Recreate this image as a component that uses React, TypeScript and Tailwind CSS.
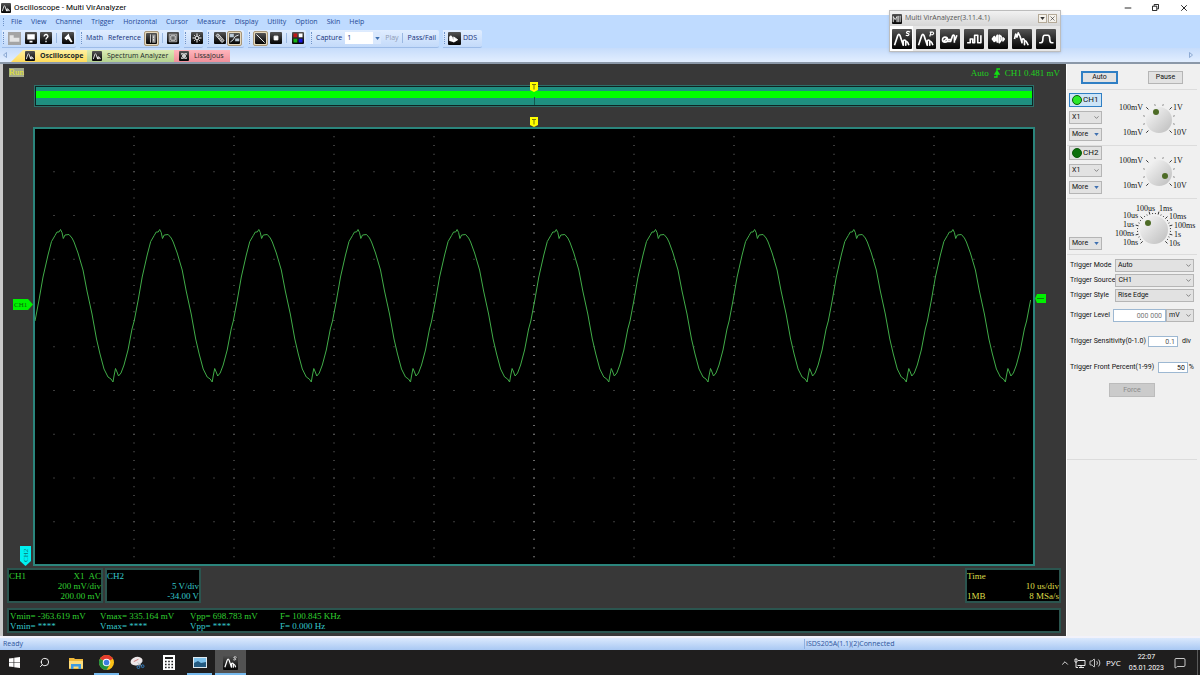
import { useState, type ReactNode } from "react";
import { ChevronDown, ChevronUp, MessageSquare, Minus, Search, Volume2, X } from "lucide-react";
import clsx from "clsx";

const menus = [
  "File", "View", "Channel", "Trigger", "Horizontal", "Cursor",
  "Measure", "Display", "Utility", "Option", "Skin", "Help",
];

const glyphs = {
  spectrum: "M2 13 L4.500 5.500 Q5.500 3 6.500 5.500 L9 13 V9.500 Q10 8 11 9.500 V13 V10.500 Q12 9.500 12.700 11 L13.500 13",
  pulse: "M2.500 11 H5 V8 H7 V11 H8.500 V5 H11 V11 H13.500 V5",
  burst: "M3.500 8 L5 6 V10z M6.300 10 V7 L7.500 5 V11 M9 5 V11 L10.500 9 V6z M12 7 L13 8 L12 9.500z",
  decay: "M2 8 L3 4 L4 6.500 L5 3 L6.500 6 L8 11 V8.500 Q9 7 10 9 V12.500 V10 Q11 9 11.700 10.500 L13 13",
  gauss: "M2.500 11 H4 Q5.500 11 5.500 8 Q5.500 5 7 5 H9.500 Q11 5 11 8 Q11 11 12.500 11 H14",
  lissa: "M4 4 C12 4 12 12 4 12 C2 9 14 7 12 4 C4 4 4 12 12 12 C14 9 2 7 4 4",
};

function Tile({ size = "size-3", children }: { size?: string; children: ReactNode }) {
  return (
    <svg
      viewBox="0 0 16 16"
      className={clsx("shrink-0 rounded-[1px] bg-linear-to-b from-[#555] to-[#050505]", size)}
      fill="none"
      stroke="white"
      strokeWidth="1.3"
      strokeLinejoin="round"
    >
      {children}
    </svg>
  );
}

function ToolButton({ label, active, children }: { label: string; active?: boolean; children: ReactNode }) {
  return (
    <button
      aria-label={label}
      className={clsx(
        "flex h-[15px] w-[15px] shrink-0 items-center justify-center rounded-[2px]",
        active && "border border-[#a8977a] bg-[#e5d8bd]",
      )}
    >
      <Tile size={active ? "size-[11px]" : "size-3"}>{children}</Tile>
    </button>
  );
}

function ToolGroup({ width, children }: { width: string; children: ReactNode }) {
  return (
    <div
      className={clsx(
        "flex h-[18px] shrink-0 items-center rounded-r-[2px] border-b border-[#9dbce8] bg-linear-to-b from-[#e0edff] to-[#c3dafa]",
        width,
      )}
    >
      <span className="mr-[3px] ml-px h-3 border-l border-dotted border-[#6f93c9]" />
      {children}
    </div>
  );
}

function Separator() {
  return <span className="mx-[3px] h-[10px] w-px shrink-0 bg-[#9ab8e2]" />;
}

function Toolbar() {
  return (
    <div className="flex h-[19px] items-center gap-1 bg-[#bfdbff] pl-[2px] text-[7px] text-[#15317a]">
      <ToolGroup width="w-[74px]">
        <button aria-label="Open" className="mr-px flex size-[15px] items-center justify-center">
          <svg viewBox="0 0 16 16" className="size-[13px] bg-[#a4a4a4]">
            <path d="M2 4h5v3h7v5H2z" fill="#e4e4e4" />
          </svg>
        </button>
        <ToolButton label="Save">
          <path d="M3 3h10v7H3zM6 11.500h4v2.500H6z" fill="white" stroke="none" />
        </ToolButton>
        <ToolButton label="About">
          <path d="M5.500 6 C5.500 2 11 3 10.500 6 C10 8 8 7.500 8 10 M8 11.500 V13.500" strokeWidth="1.800" />
        </ToolButton>
        <Separator />
        <ToolButton label="Tools">
          <path d="M3 8 L9 2 L10 6 L14 13 L12 14 L8 9 L6 11z" fill="white" stroke="none" />
        </ToolButton>
      </ToolGroup>
      <ToolGroup width="w-[100px]">
        <button className="ml-px">Math</button>
        <button className="mr-[3px] ml-[5px]">Reference</button>
        <ToolButton label="Panel" active>
          <path d="M9 2h5v12H9z" fill="#999" stroke="none" />
          <path d="M6.500 2v12" stroke="#ddd" />
          <path d="M11 5v2M11 9v2" />
        </ToolButton>
        <Separator />
        <ToolButton label="Full screen">
          <path d="M3 3h10v10H3z" stroke="#b5b5b5" />
          <path d="M5 5h6v6H5z" fill="#666" stroke="#ddd" />
        </ToolButton>
      </ToolGroup>
      <ToolGroup width="w-[19px]">
        <ToolButton label="Auto set">
          <circle cx="8" cy="8" r="2.500" />
          <path d="M8 2v3M8 11v3M2 8h3M11 8h3M4 4l1 1M12 4l-1 1M4 12l1-1M12 12l-1-1" />
        </ToolButton>
      </ToolGroup>
      <ToolGroup width="w-[37px]">
        <ToolButton label="Ruler">
          <path d="M2.500 4.500l3-2 8 9-3 2.500z" fill="#777" strokeWidth="1" />
          <path d="M5 6l2-1M7 9l2-1M9 11l2-1" strokeWidth="1" />
        </ToolButton>
        <ToolButton label="Cursors" active>
          <path d="M1 1h6v5H1zM9 8h6v4H9z" fill="#b9c9d6" stroke="none" />
          <path d="M2 13l4-3 3-5 5-2" stroke="#eef4f8" />
        </ToolButton>
      </ToolGroup>
      <ToolGroup width="w-[58px]">
        <ToolButton label="Line" active>
          <path d="M2 2l12 12" />
        </ToolButton>
        <ToolButton label="Dots">
          <path d="M5.500 5.500h5v5h-5z" fill="white" />
        </ToolButton>
        <Separator />
        <ToolButton label="Colors">
          <g stroke="none">
            <path d="M2 2h5v5H2z" fill="#c01818" />
            <path d="M9 2h5v5H9z" fill="#fff" />
            <path d="M2 9h5v5H2z" fill="#12b512" />
            <path d="M9 9h5v5H9z" fill="#1717e0" />
          </g>
        </ToolButton>
      </ToolGroup>
      <ToolGroup width="w-[129px]">
        <label htmlFor="capture" className="mr-[3px] ml-px">Capture</label>
        <span className="relative">
          <select id="capture" className="block h-3 w-9 appearance-none bg-white pl-[2px] text-[7px]">
            <option>1</option>
          </select>
          <span className="pointer-events-none absolute inset-y-0 right-0 flex w-2 items-center justify-center bg-[#d9e8fd]">
            <Caret />
          </span>
        </span>
        <button disabled className="ml-1 text-[#8f9bb3]">Play</button>
        <Separator />
        <button className="ml-[2px]">Pass/Fail</button>
      </ToolGroup>
      <ToolGroup width="w-[39px]">
        <button className="flex items-center gap-[2px]">
          <Tile size="size-[13px]">
            <path d="M2 11V6q1.500-3 3 0l2 5V6l5 3.500-5 3" fill="white" strokeWidth="1" />
          </Tile>
          DDS
        </button>
      </ToolGroup>
    </div>
  );
}

function Caret() {
  return (
    <svg viewBox="0 0 6 4" className="h-[3px] w-[5px]">
      <path d="M0 0h6L3 4z" fill="#3f70b0" />
    </svg>
  );
}

const tabs = [
  {
    name: "Oscilloscope",
    glyph: glyphs.spectrum,
    style: "w-[76px] pl-[14px] font-bold bg-linear-to-b from-[#fff0a0] to-[#ffdb58] [clip-path:polygon(12px_0,100%_0,100%_100%,0_100%)]",
  },
  { name: "Spectrum Analyzer", glyph: glyphs.spectrum, style: "w-[87px] pl-[5px] font-medium bg-linear-to-b from-[#dcebb4] to-[#b3d18e]" },
  { name: "Lissajous", glyph: glyphs.lissa, style: "w-[56px] pl-[5px] font-medium bg-linear-to-b from-[#ffb5bc] to-[#ef8f9a]" },
];

function TabStrip() {
  const [current, setCurrent] = useState("Oscilloscope");
  return (
    <div className="flex h-[16px] items-end border-b-2 border-[#8b98a8] bg-linear-to-b from-[#c6dcfb] to-[#e2eeff] text-[#1c2b2b]">
      <button aria-label="Scroll left" className="w-[11px] self-center pl-[3px]">
        <svg viewBox="0 0 4 6" className="h-[6px] w-1" fill="none" stroke="#7c9cc9" strokeWidth=".8">
          <path d="M3.500 .5v5L.5 3z" />
        </svg>
      </button>
      {tabs.map((tab) => (
        <button
          key={tab.name}
          aria-pressed={current === tab.name}
          onClick={() => setCurrent(tab.name)}
          className={clsx("flex h-3 items-center gap-[5px] text-[7px]", tab.style)}
        >
          <Tile size="size-[10px]">
            <path d={tab.glyph} />
          </Tile>
          {tab.name}
        </button>
      ))}
      <button aria-label="Scroll right" className="mr-[7px] ml-auto self-center">
        <svg viewBox="0 0 4 6" className="h-[6px] w-1" fill="none" stroke="#7c9cc9" strokeWidth=".8">
          <path d="M.5 .5v5L3.500 3z" />
        </svg>
      </button>
    </div>
  );
}

// One period of the captured signal, x from the start of the period
const PERIOD = 99.16;
const cycle = [
  [1, 193], [5, 172], [9, 149], [14, 127], [17.500, 113.500], [21, 107.500], [23, 104], [25, 104], [26.500, 101.500],
  [28, 104.500], [29.300, 110.500], [31, 107], [35, 106.500], [38, 110], [40, 114], [44, 125], [49, 142],
  [53, 163], [58, 186], [62.500, 211], [66, 226], [70, 241], [74, 249], [77, 251], [79, 254],
  [80, 248], [81.500, 240.500], [83, 244], [84.500, 248], [87, 245], [90, 237], [94, 222], [98, 201],
];

const trace = Array.from({ length: 11 }, (_, n) => cycle.map(([x, y]) => [x + n * PERIOD, y]))
  .flat()
  .filter(([x]) => x < 999)
  .map(([x, y]) => `${x.toFixed(1)},${y}`)
  .join(" ");

const rows = [1, 2, 3, 4, 5, 6, 7, 8, 9];

function Marker() {
  return (
    <svg viewBox="0 0 8 10" className="h-[10px] w-2">
      <path d="M0 0h8v8l-4 2-4-2z" fill="#ffff00" />
      <path d="M2 2.500h4M4 2.500v5" stroke="#77770a" fill="none" />
    </svg>
  );
}

function Plot() {
  return (
    <div className="relative min-h-[300px] flex-1 border-2 border-[#2b857c] bg-black">
      <svg viewBox="1 1 998 435" preserveAspectRatio="none" className="absolute inset-0 h-full w-full">
        {rows.map((n) => (
          <g key={n} stroke="#777" fill="none">
            <path d={`M19.500 ${n * 43.75}H1000`} strokeDasharray="1 19" />
            <path d={`M${n * 100} 8.250V437`} strokeDasharray="1 7.75" />
          </g>
        ))}
        <path d="M500 8.250V437" stroke="#9a9a9a" strokeDasharray="1 7.75" />
        <polyline points={trace} fill="none" stroke="#41ac48" strokeWidth="1" />
      </svg>
      <div className="absolute -top-3 left-1/2 -translate-x-1/2">
        <Marker />
      </div>
      <svg viewBox="0 0 20 11" className="absolute top-[39%] -left-[22px] h-[11px] w-5">
        <path d="M0 0h15l5 5.500-5 5.500H0z" fill="#00f000" />
        <text x="1" y="8" fontSize="7" fill="#0a6a0a" fontFamily="Liberation Serif">CH1</text>
      </svg>
      <svg viewBox="0 0 11 9" className="absolute top-[38%] -right-[13px] h-[9px] w-[11px]">
        <path d="M2 0h9v9H2L0 4.500z" fill="#00f000" />
        <path d="M2 4.500h7" stroke="#0a8a0a" />
      </svg>
      <svg viewBox="0 0 11 20" className="absolute -bottom-[2px] -left-[15px] h-5 w-[11px]">
        <path d="M0 0h11v15l-5.500 5L0 15z" fill="#00f0f0" />
        <text transform="rotate(-90)" x="-16" y="8" fontSize="7" fill="#087878" fontFamily="Liberation Serif">CH2</text>
      </svg>
    </div>
  );
}

const infoBox = "flex flex-col justify-center border-2 border-[#2b554f] bg-black leading-[10px]";

function Scope() {
  return (
    <section className="flex min-w-0 flex-1 flex-col border-l-[3px] border-[#c9c9c9] bg-[#383838] font-['Liberation_Serif',serif] text-[9px]">
      <div className="flex h-[21px] items-start justify-between pt-1 pr-[6px] pl-[6px]">
        <span className="bg-[#a3aa8c] leading-[9px] text-[#e6e632]">Run</span>
        <span className="flex items-center gap-1 leading-[10px] text-[#1fd01f]">
          Auto
          <svg viewBox="0 0 8 10" className="h-[10px] w-2" fill="none" stroke="#12e012" strokeWidth="1.300">
            <path d="M1 9h3V1h3M2 6l2-3 2 3z" />
          </svg>
          CH1 0.481 mV
        </span>
      </div>

      <div className="mr-8 mb-[20px] ml-[31px]">
        <div className="relative border border-[#2d6f69] bg-[#0f2423] p-px">
          <div className="h-1 bg-[#1f8f80]" />
          <div className="h-[7px] bg-[#00ff00]" />
          <div className="h-[7px] bg-[#1f8f80]" />
          <div className="absolute -top-1 left-1/2 flex -translate-x-1/2 flex-col items-center">
            <Marker />
            <span className="mt-[5px] h-[8px] w-px bg-[#14574f]" />
          </div>
        </div>
      </div>

      <div className="mr-[31px] ml-[30px] flex flex-1 flex-col">
        <Plot />
      </div>

      <div className="mr-[5px] mt-[2px] ml-1 flex h-[35px] gap-[2px]">
        <div className={clsx(infoBox, "w-[96px] text-[#30d030]")}>
          <p className="flex justify-between"><span>CH1</span><span className="whitespace-pre">X1  AC</span></p>
          <p className="text-right">200 mV/div</p>
          <p className="text-right">200.00 mV</p>
        </div>
        <div className={clsx(infoBox, "w-[96px] text-[#35c8cc]")}>
          <p>CH2</p>
          <p className="text-right">5 V/div</p>
          <p className="text-right">-34.00 V</p>
        </div>
        <div className={clsx(infoBox, "ml-auto w-[96px] text-[#dede48]")}>
          <p>Time</p>
          <p className="text-right">10 us/div</p>
          <p className="flex justify-between"><span>1MB</span><span>8 MSa/s</span></p>
        </div>
      </div>

      <div className={clsx(infoBox, "mt-[5px] mr-[5px] mb-[3px] ml-1 h-[25px]")}>
        <div className="grid grid-cols-[90px_90px_90px_90px] pl-px text-[#30d030]">
          <span>Vmin= -363.619 mV</span>
          <span>Vmax= 335.164 mV</span>
          <span>Vpp= 698.783 mV</span>
          <span>F= 100.845 KHz</span>
        </div>
        <div className="grid grid-cols-[90px_90px_90px_90px] pl-px text-[#35c8cc]">
          <span>Vmin= ****</span>
          <span>Vmax= ****</span>
          <span>Vpp= ****</span>
          <span>F= 0.000 Hz</span>
        </div>
      </div>
    </section>
  );
}

interface KnobProps {
  cx: number;
  cy: number;
  r: number;
  steps: number;
  dot: [number, number];
  labels: [string, number, number, "start" | "end"][];
  height: number;
}

function Knob({ cx, cy, r, steps, dot, labels, height }: KnobProps) {
  const ticks = Array.from({ length: steps + 1 }, (_, i) => {
    const a = ((-135 + (270 / steps) * i) * Math.PI) / 180;
    const inner = r + 2;
    const outer = i % 3 === 0 ? r + 5 : r + 3;
    return `M${cx + Math.sin(a) * inner} ${cy - Math.cos(a) * inner}L${cx + Math.sin(a) * outer} ${cy - Math.cos(a) * outer}`;
  });
  return (
    <svg width="94" height={height} className="shrink-0" fontFamily="Liberation Serif" fontSize="8" fill="#111">
      <defs>
        <linearGradient id="knob" x1="0" y1="0" x2="1" y2="1">
          <stop offset="0" stopColor="#fafafa" />
          <stop offset="1" stopColor="#bcbcbc" />
        </linearGradient>
      </defs>
      <path d={ticks.join("")} stroke="#333" />
      <circle cx={cx} cy={cy} r={r} fill="url(#knob)" />
      <circle cx={dot[0]} cy={dot[1]} r="3" fill="#4d6b26" />
      {labels.map(([text, x, y, anchor]) => (
        <text key={text} x={x} y={y} textAnchor={anchor}>{text}</text>
      ))}
    </svg>
  );
}

const voltLabels: KnobProps["labels"] = [
  ["100mV", 40, 17, "end"],
  ["1V", 70, 17, "start"],
  ["10mV", 40, 42, "end"],
  ["10V", 70, 42, "start"],
];

const timeLabels: KnobProps["labels"] = [
  ["10ns", 35, 46, "end"],
  ["100ns", 31, 37, "end"],
  ["1us", 31, 28, "end"],
  ["10us", 35, 19, "end"],
  ["100us", 52, 12, "end"],
  ["1ms", 56, 12, "start"],
  ["10ms", 66, 20, "start"],
  ["100ms", 71, 29, "start"],
  ["1s", 71, 38, "start"],
  ["10s", 66, 47, "start"],
];

function Select({ id, label, value, width }: { id: string; label?: string; value: string; width: string }) {
  return (
    <span className={clsx("relative shrink-0", width)}>
      <select
        id={id}
        aria-label={label}
        className="block h-[13px] w-full appearance-none border border-[#b5b5b5] bg-[#e2e2e2] pl-[2px] text-[7px] leading-[9px]"
      >
        <option>{value}</option>
      </select>
      <ChevronDown className="pointer-events-none absolute top-[3px] right-[2px] size-[7px] text-[#444]" />
    </span>
  );
}

function MoreButton() {
  return (
    <button className="flex h-[13px] w-[33px] items-center justify-between border border-[#b5b5b5] bg-[#e2e2e2] px-[2px]">
      More
      <Caret />
    </button>
  );
}

function Channel({ name, on, dot }: { name: string; on?: boolean; dot: [number, number] }) {
  return (
    <div className="flex h-[53px] justify-between border-b border-[#dcdcdc] pl-[2px]">
      <div className="flex flex-col gap-[4px]">
        <button
          aria-pressed={!!on}
          className={clsx(
            "flex h-[14px] w-[33px] items-center gap-px border pl-[2px] text-[8px]",
            on ? "border-[#2f7fc4] bg-[#cce4f7]" : "border-[#b5b5b5] bg-[#e2e2e2]",
          )}
        >
          <span className={clsx("size-[10px] rounded-full border border-[#0b5a0b]", on ? "bg-[#2be82b]" : "bg-[#0d700d]")} />
          {name}
        </button>
        <Select id={`${name}-probe`} label={`${name} probe`} value="X1" width="w-[33px]" />
        <MoreButton />
      </div>
      <Knob cx={56} cy={27} r={13} steps={9} dot={dot} labels={voltLabels} height={52} />
    </div>
  );
}

const input = "h-[11px] border border-[#9db8d2] bg-white pr-[2px] text-right text-[7px]";

function ControlPanel() {
  return (
    <aside className="w-[134px] shrink-0 border-l border-white bg-[#f0f0f0] pr-[3px] font-['Roboto',sans-serif] text-[7px] whitespace-nowrap text-[#111]">
      <div className="flex h-[26px] items-center justify-between border-b border-[#dcdcdc] px-[14px] pt-[2px]">
        <button className="h-[13px] w-[37px] border-2 border-[#2f7fc4] bg-[#e2e2e2] leading-[9px]">Auto</button>
        <button className="h-[13px] w-[35px] border border-[#b5b5b5] bg-[#e2e2e2] leading-[11px]">Pause</button>
      </div>
      <div className="pt-[3px]">
        <Channel name="CH1" on dot={[53, 19]} />
        <Channel name="CH2" dot={[62, 30]} />
        <div className="flex h-[56px] items-end justify-between border-b border-[#dcdcdc] pl-[2px]">
          <div className="pb-[4px]">
            <MoreButton />
          </div>
          <Knob cx={51} cy={31} r={14} steps={27} dot={[45, 24]} labels={timeLabels} height={55} />
        </div>
      </div>

      <form className="h-[205px] border-b border-[#dcdcdc] pt-1 pl-[3px]">
        <div className="flex flex-col gap-[2px]">
          {[
            ["Trigger Mode", "Auto"],
            ["Trigger Source", "CH1"],
            ["Trigger Style", "Rise Edge"],
          ].map(([label, value]) => (
            <div key={label} className="flex items-center justify-between pr-[3px]">
              <label htmlFor={label}>{label}</label>
              <Select id={label} value={value} width="w-[79px]" />
            </div>
          ))}
        </div>
        <div className="mt-[7px] flex items-center pr-[3px]">
          <label htmlFor="level" className="mr-auto">Trigger Level</label>
          <input id="level" defaultValue="000 000" className="h-[13px] w-[53px] border border-[#9db8d2] bg-white pr-[3px] text-right text-[7px] text-[#777]" />
          <Select id="unit" label="Level unit" value="mV" width="w-[28px]" />
        </div>
        <div className="mt-[14px] flex items-center pr-[6px]">
          <label htmlFor="sens" className="mr-auto">Trigger Sensitivity(0-1.0)</label>
          <input id="sens" defaultValue="0.1" className={clsx(input, "mr-[4px] w-[30px] text-[#555]")} />
          div
        </div>
        <div className="mt-[15px] flex items-center pr-[3px]">
          <label htmlFor="front" className="mr-auto">Trigger Front Percent(1-99)</label>
          <input id="front" defaultValue="50" className={clsx(input, "mr-px w-[30px]")} />
          %
        </div>
        <button disabled className="mt-[10px] ml-[39px] h-[14px] w-[46px] border border-[#bcbcbc] bg-[#cbcbcb] text-[#8a8a8a]">
          Force
        </button>
      </form>
    </aside>
  );
}

const instruments: { name: string; d: string; extra?: string }[] = [
  { name: "Oscilloscope", d: glyphs.spectrum, extra: "M14.500 2.500C12 1 10.500 3 12.500 3.500S13.500 6 11 5" },
  { name: "Spectrum", d: glyphs.spectrum, extra: "M11 6l1-3.500M11 2.500h2.500c1.500 1 0 2.500-2 2" },
  { name: "Recorder", d: "M2 8.500a2 2 0 1 0 4 0a2 2 0 1 0-4 0M3 10l3-3M6 10h2.500L10 5.500q.8-1.500 1.500 0V11M6.500 8.500h2M12 9l1.500-4" },
  { name: "Logic", d: glyphs.pulse },
  { name: "Generator", d: glyphs.burst },
  { name: "Decay", d: glyphs.decay },
  { name: "Filter", d: glyphs.gauss },
];

function Launcher() {
  return (
    <div className="absolute top-[10px] right-[139px] w-[172px] border border-[#bdbdbd] bg-[#e6e6e6] shadow-sm">
      <div className="flex h-[15px] items-center bg-linear-to-b from-[#f2f2f2] to-[#d6d6d6] pr-[3px] pl-[2px] text-[7px] text-[#555]">
        <Tile size="size-[10px]">
          <path d="M2 13V4l3 5 3-5v9M10 3v10M13 3v10" />
        </Tile>
        <span className="mr-auto ml-[3px]">Multi VirAnalyzer(3.11.4.1)</span>
        <button aria-label="Collapse" className="mr-px flex size-[9px] items-center justify-center border border-[#b5aa98] bg-[#f5f2ec]">
          <svg viewBox="0 0 6 4" className="h-[3px] w-[5px]"><path d="M0 0h6L3 4z" fill="#333" /></svg>
        </button>
        <button aria-label="Close launcher" className="flex size-[9px] items-center justify-center border border-[#b5aa98] bg-[#f5f2ec]">
          <X className="size-[7px] text-[#222]" />
        </button>
      </div>
      <div className="flex h-[25px] justify-between pr-[2px]">
        {instruments.map((item, i) => (
          <button key={item.name} aria-label={item.name} className={clsx("flex w-[23px] items-center justify-center", i === 0 && "bg-white")}>
            <Tile size="size-5">
              <path d={item.d} />
              {item.extra && <path d={item.extra} strokeWidth=".9" />}
            </Tile>
          </button>
        ))}
      </div>
    </div>
  );
}

function TaskItem({ label, width = "w-[31px]", state, children }: { label: string; width?: string; state?: "open" | "active"; children: ReactNode }) {
  return (
    <button aria-label={label} className={clsx("relative flex h-full items-center justify-center", width, state === "active" && "bg-[#525252]")}>
      {children}
      {state && <span className={clsx("absolute bottom-0 h-[2px] bg-[#76b9ed]", state === "active" ? "inset-x-0" : "inset-x-[3px]")} />}
    </button>
  );
}

function Taskbar() {
  return (
    <footer className="flex h-[25px] items-center bg-[#1f1e1e] text-white">
      <TaskItem label="Start" width="w-[29px]">
        <svg viewBox="0 0 12 12" className="size-[11px]" fill="white">
          <path d="M0 1.700L5 1v4.600H0zM5.700 .9L12 0v5.600H5.700zM0 6.300h5V11l-5-.7zM5.700 6.300H12V12l-6.300-.9z" />
        </svg>
      </TaskItem>
      <TaskItem label="Search">
        <Search className="size-[11px] -scale-x-100" />
      </TaskItem>
      <TaskItem label="Explorer">
        <svg viewBox="0 0 14 12" className="h-3 w-[14px]">
          <path d="M0 1h5l1 1h8v10H0z" fill="#f0b93a" />
          <path d="M0 4h14v7H0z" fill="#fcdc7c" />
          <path d="M2 12V7h10v5H9.500V9.500h-5V12z" fill="#3f9be0" />
        </svg>
      </TaskItem>
      <TaskItem label="Chrome" state="open">
        <svg viewBox="0 0 16 16" className="size-[15px]">
          <circle cx="8" cy="8" r="8" fill="#fbc116" />
          <path d="M8 8L1.070 4A8 8 0 0 1 14.930 4z" fill="#e33b2e" />
          <path d="M8 8L1.070 4A8 8 0 0 0 8 16l3.500-6z" fill="#229342" />
          <circle cx="8" cy="8" r="4" fill="white" />
          <circle cx="8" cy="8" r="3" fill="#3c7de0" />
        </svg>
      </TaskItem>
      <TaskItem label="Snipping Tool">
        <svg viewBox="0 0 16 14" className="h-[13px] w-[15px]">
          <ellipse cx="7" cy="5.500" rx="6.500" ry="4.500" fill="#ece6e8" transform="rotate(-15 7 5.500)" />
          <path d="M4 6l5-2.500" stroke="#c77" />
          <path d="M8 7l5 4M13 6l-4 5" stroke="#b9c4cc" />
          <circle cx="9" cy="12" r="1.500" fill="none" stroke="#3483c9" />
          <circle cx="13.500" cy="11" r="1.500" fill="none" stroke="#3483c9" />
        </svg>
      </TaskItem>
      <TaskItem label="Calculator">
        <svg viewBox="0 0 12 15" className="h-[15px] w-3">
          <path d="M0 0h12v15H0z" fill="white" />
          <path d="M2 2h8v2H2z" fill="#222" />
          <path d="M2 6.500h8M2 9.500h8M2 12.500h8" stroke="#222" strokeWidth="1.500" strokeDasharray="1.600 1.600" />
        </svg>
      </TaskItem>
      <TaskItem label="Photos" state="open">
        <svg viewBox="0 0 14 11" className="h-[11px] w-[14px]">
          <path d="M0 0h14v11H0z" fill="#dfe8ee" />
          <path d="M1 1h12v9H1z" fill="#7cc0ea" />
          <path d="M1 6l4-2 3 2 5-1v5H1z" fill="#245a80" />
        </svg>
      </TaskItem>
      <TaskItem label="Multi VirAnalyzer" state="active">
        <Tile size="size-[15px]">
          <path d={glyphs.spectrum} />
          <path d="M14.500 2.500C12 1 10.500 3 12.500 3.500S13.500 6 11 5" strokeWidth=".9" />
        </Tile>
      </TaskItem>
      <div className="ml-auto flex h-full items-center">
        <ChevronUp className="mr-[4px] size-[10px]" />
        <svg viewBox="0 0 12 10" className="mr-[3px] h-[10px] w-3" fill="none" stroke="white">
          <path d="M4 2.500h7v5H3.500M7 7.500v2M5 9.500h5M1 1v3h2V1zM2 4v5.500h2" strokeWidth=".9" />
        </svg>
        <Volume2 className="mr-[5px] size-3" strokeWidth={1.5} />
        <span className="text-[8px]">РУС</span>
        <div className="mx-2 text-center font-['Roboto',sans-serif] text-[7px] leading-[11px]">
          <p>22:07</p>
          <p>05.01.2023</p>
        </div>
        <MessageSquare className="mr-[8px] ml-[2px] size-3" strokeWidth={1.5} />
        <span className="ml-[3px] h-full w-[3px] border-l border-[#5a5a5a]" />
      </div>
    </footer>
  );
}

export default function App() {
  return (
    <div className="relative flex min-h-screen flex-col bg-white font-['Open_Sans','Noto_Sans',sans-serif]">
      <header className="flex h-[15px] items-center text-[8px] text-black">
        <span className="mr-[3px] ml-px">
          <Tile size="size-[10px]">
            <path d={glyphs.spectrum} />
          </Tile>
        </span>
        <h1 className="mr-auto font-['Roboto',sans-serif]">Oscilloscope - Multi VirAnalyzer</h1>
        <button aria-label="Minimize" className="mr-[19px]"><Minus className="size-[10px]" /></button>
        <button aria-label="Restore" className="mr-[20px]">
          <svg viewBox="0 0 8 8" className="size-[7px]" fill="none" stroke="black">
            <path d="M.5 2.500h5v5h-5zM2.500 2V.5h5v5H6" />
          </svg>
        </button>
        <button aria-label="Close" className="mr-[11px]"><X className="size-[10px]" /></button>
      </header>
      <nav className="flex h-[14px] items-center gap-[9px] bg-[#bfdbff] pl-[3px] text-[7px] text-[#1f4a96]">
        <span className="-mr-[2px] h-[8px] border-l border-dotted border-[#6f93c9]" />
        {menus.map((menu) => (
          <button key={menu}>{menu}</button>
        ))}
      </nav>
      <Toolbar />
      <TabStrip />
      <main className="flex flex-1">
        <Scope />
        <ControlPanel />
      </main>
      <div className="flex h-[14px] items-center border-t-2 border-[#f2f2fa] bg-linear-to-b from-[#dbe9fd] to-[#a9c8f3] text-[7px] text-[#2c559c]">
        <span className="w-[67%] pl-[3px]">Ready</span>
        <span className="border-l border-[#8fb0e0] pl-px">ISDS205A(1.1)(2)Connected</span>
      </div>
      <Taskbar />
      <Launcher />
    </div>
  );
}
